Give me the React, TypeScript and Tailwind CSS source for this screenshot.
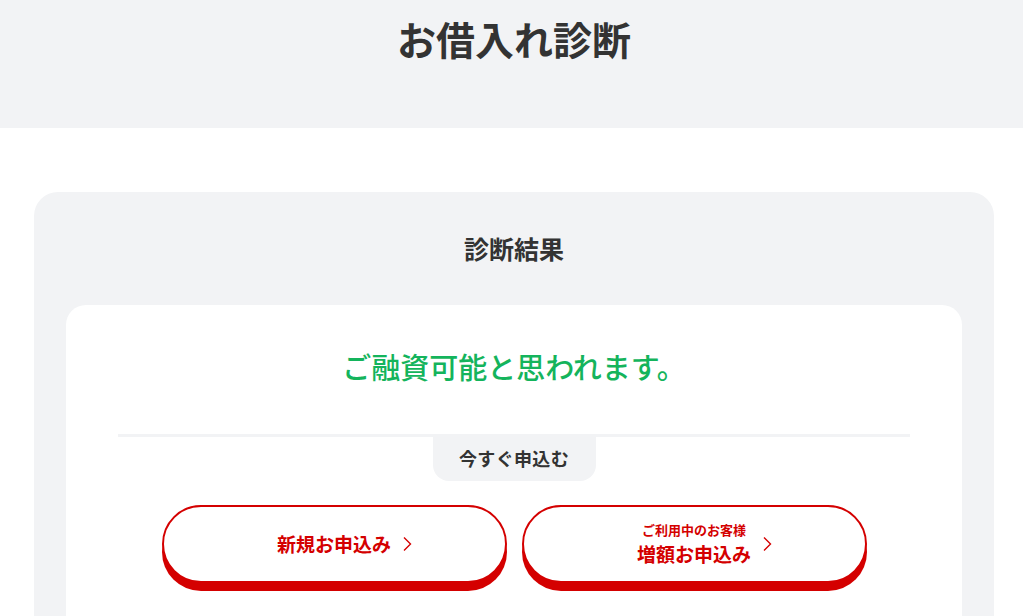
import React from 'react';

const Chevron: React.FC = () => (
  <svg
    className="absolute left-full top-1/2 ml-[11px] h-[16px] w-[10px] -translate-y-1/2"
    viewBox="0 0 10 16"
    fill="none"
    stroke="currentColor"
    strokeWidth="1.4"
  >
    <path d="M2 1.5 L8.5 8 L2 14.5" />
  </svg>
);

const ApplyButton: React.FC<{ sub?: string; label: string }> = ({ sub, label }) => (
  <button className="flex h-[78px] w-[345px] items-center justify-center rounded-full border-2 border-[#d40000] bg-white text-[#d40000] shadow-[0_8px_0_#d40000]">
    <span className="relative flex flex-col items-center">
      {sub && <span className="text-[13px] font-bold leading-[20px]">{sub}</span>}
      <span className="text-[19px] font-bold leading-[28px]">{label}</span>
      <Chevron />
    </span>
  </button>
);

const App: React.FC = () => {
  return (
    <div
      className="min-h-[616px] overflow-hidden bg-white text-[#333]"
      style={{ fontFamily: '"Noto Sans CJK JP", "Noto Sans", sans-serif' }}
    >
      <header className="h-[128px] bg-[#f2f3f5] pl-[5px] pt-[9px]">
        <h1 className="text-center text-[39px] font-bold leading-[58px]">お借入れ診断</h1>
      </header>

      <main className="pl-[5px] pt-[64px]">
        <section className="mx-auto w-[960px] rounded-[24px] bg-[#f2f3f5] px-[32px] pt-[38px] pb-[40px]">
          <h2 className="text-center text-[25px] font-bold leading-[36px]">診断結果</h2>

          <div className="mt-[39px] rounded-[20px] bg-white px-[52px] pt-[40px] pb-[60px]">
            <p className="text-center text-[29px] font-medium leading-[43px] text-[#14b45c]">
              ご融資可能と思われます。
            </p>

            <div className="mt-[46px] border-t-[3px] border-[#f2f3f5]">
              <div className="mx-auto flex h-[44px] w-[163px] items-center justify-center rounded-b-[16px] bg-[#f2f3f5] pb-[2px] text-[18px] font-bold tracking-[0.02em]">
                今すぐ申込む
              </div>
            </div>

            <div className="mt-[24px] flex justify-center gap-[15px]">
              <ApplyButton label="新規お申込み" />
              <ApplyButton sub="ご利用中のお客様" label="増額お申込み" />
            </div>
          </div>
        </section>
      </main>
    </div>
  );
};

export default App;
